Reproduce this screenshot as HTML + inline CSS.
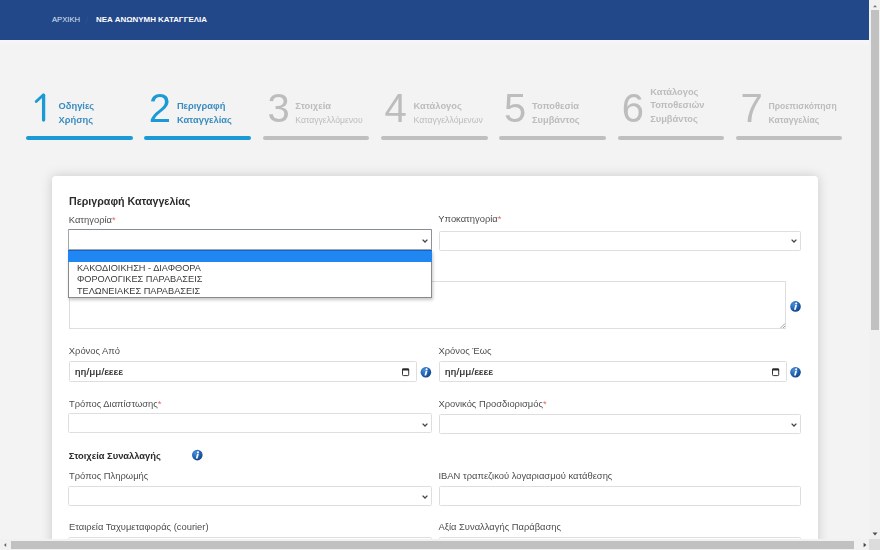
<!DOCTYPE html>
<html><head><meta charset="utf-8">
<style>
*{box-sizing:border-box}
html,body{margin:0;padding:0}
body{width:880px;height:550px;overflow:hidden;position:relative;background:#f3f3f3;font-family:"Liberation Sans",sans-serif}
.a{position:absolute;white-space:nowrap}
#hdr{left:0;top:0;width:869px;height:40px;background:#23488a}
.bc1{left:52px;top:15.3px;font-size:7.65px;color:#dfe6f2;line-height:10px}
.bcs{left:85.5px;top:15.5px;font-size:8.5px;color:#2c549a;line-height:10px}
.bc2{left:96px;top:15.3px;font-size:7.94px;color:#fff;font-weight:bold;line-height:10px}
.bar{top:135.6px;height:4.1px;width:106.5px;border-radius:2px;background:#bfbfbf}
.bar.on{background:#1c9ad6}
.dig{font-size:40px;line-height:40px;top:88px;color:#bdbdbd}
.dig.on{color:#1c9ad6}
.lbl{font-weight:bold;font-size:9.3px;line-height:13.5px;color:#bcbcbc}
.lbl.on{color:#3a8cc0}
.card{left:52px;top:176px;width:766px;height:420px;background:#fff;border-radius:4px;box-shadow:0 0 12px rgba(0,0,0,.17)}
.t{font-size:9.4px;color:#4d4d4d;line-height:12px}
.req{color:#e06a6a}
.inp{background:#fff;border:1px solid #dedede;border-radius:1.5px}
.chev{position:absolute;width:6px;height:4px}
.info{position:absolute;width:11.4px;height:11.4px;border-radius:50%;background:radial-gradient(circle at 40% 30%,#4f8fd6 0%,#1f62b0 55%,#154e96 100%)}
.info:after{content:"";position:absolute}
#vs{left:869px;top:0;width:11px;height:539px;background:#f1f1f1}
.dt{font-size:9.8px;line-height:12px;color:#222;letter-spacing:0.3px;-webkit-text-stroke:0.2px #222}
.opt{position:absolute;left:7.6px;font-size:9.2px;line-height:11.6px;color:#3a3a3a}
#hs{left:0;top:539px;width:869px;height:11px;background:#f1f1f1}
</style></head><body><div id="wrap" style="position:absolute;left:0;top:0;width:880px;height:550px;overflow:hidden;filter:blur(0.3px)">
<svg width="0" height="0" style="position:absolute"><defs><radialGradient id="g" cx="35%" cy="30%" r="75%"><stop offset="0" stop-color="#4a90dc"/><stop offset=".6" stop-color="#1f62b2"/><stop offset="1" stop-color="#123f80"/></radialGradient></defs></svg>
<div id="hdr" class="a"></div>
<div class="a" style="left:0;top:40px;width:869px;height:6px;background:linear-gradient(#f7f7fc,#f3f3f3)"></div>
<div class="a bc1">ΑΡΧΙΚΗ</div>
<div class="a bcs">/</div>
<div class="a bc2">ΝΕΑ ΑΝΩΝΥΜΗ ΚΑΤΑΓΓΕΛΙΑ</div>

<!-- steps -->
<div class="a bar on" style="left:26.1px"></div>
<div class="a bar on" style="left:144.4px"></div>
<div class="a bar" style="left:262.7px"></div>
<div class="a bar" style="left:381px"></div>
<div class="a bar" style="left:499.3px"></div>
<div class="a bar" style="left:617.6px"></div>
<div class="a bar" style="left:735.9px"></div>

<svg class="a" style="left:30px;top:90px" width="20" height="34" viewBox="30 90 20 34"><path d="M43.6 95.2V120.1" stroke="#1c9ad6" stroke-width="3.3" stroke-linecap="round"/><path d="M43.2 95 L36.2 101.6" stroke="#1c9ad6" stroke-width="2.8" stroke-linecap="round"/></svg>
<div class="a dig on" style="left:148.7px">2</div>
<div class="a dig" style="left:267.4px">3</div>
<div class="a dig" style="left:384.5px">4</div>
<div class="a dig" style="left:504px">5</div>
<div class="a dig" style="left:621.8px">6</div>
<div class="a dig" style="left:740.5px">7</div>

<div class="a lbl on" style="left:58.6px;top:100px">Οδηγίες<br>Χρήσης</div>
<div class="a lbl on" style="left:176.9px;top:100px">Περιγραφή<br>Καταγγελίας</div>
<div class="a lbl" style="left:295.3px;top:100px">Στοιχεία<br><span style="font-weight:normal;font-size:8.65px">Καταγγελλόμενου</span></div>
<div class="a lbl" style="left:413.5px;top:100px">Κατάλογος<br><span style="font-weight:normal;font-size:8.7px">Καταγγελλόμενων</span></div>
<div class="a lbl" style="left:532px;top:100px">Τοποθεσία<br>Συμβάντος</div>
<div class="a lbl" style="left:650.2px;top:85.8px">Κατάλογος<br>Τοποθεσιών<br>Συμβάντος</div>
<div class="a lbl" style="left:768.5px;top:100px;font-size:8.6px">Προεπισκόπηση<br>Καταγγελίας</div>

<!-- card -->
<div class="a card"></div>
<div class="a" style="left:69px;top:193.9px;font-size:10.66px;line-height:14px;font-weight:bold;color:#2b2b2b">Περιγραφή Καταγγελίας</div>
<div class="a t" style="left:68.8px;top:213.6px">Κατηγορία<span class="req">*</span></div>
<div class="a t" style="left:438.3px;top:213.4px">Υποκατηγορία<span class="req">*</span></div>

<div class="a inp" style="left:438.6px;top:230.5px;width:362px;height:20px"></div>
<svg class="a" style="left:790.5px;top:238.5px" width="6" height="4" viewBox="0 0 6 4"><polyline points="0.6,0.6 3,3 5.4,0.6" fill="none" stroke="#444" stroke-width="1.3"/></svg>

<div class="a inp" style="left:68.7px;top:281.2px;width:717.7px;height:48px;border-radius:0"></div>
<svg class="a" style="left:779px;top:322px" width="7" height="7" viewBox="0 0 7 7"><path d="M6 1.5L1.5 6M6 4L4 6" stroke="#888" stroke-width="0.8"/></svg>
<svg class="a" style="left:789px;top:300px" width="13" height="13" viewBox="0 0 13 13"><g transform="translate(0.50,0.40)"><circle cx="6" cy="6" r="5.3" fill="url(#g)"/><circle cx="6.7" cy="3.1" r="1.05" fill="#fff"/><path d="M5.8 4.7L7.5 4.7L6.3 9.3L4.5 9.3Z" fill="#fff"/></g></svg>

<div class="a t" style="left:68.8px;top:344.7px">Χρόνος Από</div>
<div class="a t" style="left:438.5px;top:344.7px">Χρόνος Έως</div>
<div class="a inp" style="left:68.5px;top:360.5px;width:348.3px;height:21.7px"></div>
<div class="a inp" style="left:438.6px;top:360.5px;width:348px;height:21.7px"></div>
<div class="a dt" style="left:75px;top:366.4px">ηη/μμ/εεεε</div>
<div class="a dt" style="left:445px;top:366.4px">ηη/μμ/εεεε</div>
<svg class="a" style="left:402.10px;top:368.10px" width="8" height="9" viewBox="0 0 8 9"><rect x="0.5" y="1" width="6.2" height="6.6" rx="0.9" fill="none" stroke="#2a2a2a" stroke-width="0.95"/><rect x="0.1" y="0.5" width="7" height="2" rx="0.6" fill="#2a2a2a"/></svg>
<svg class="a" style="left:771.60px;top:368.10px" width="8" height="9" viewBox="0 0 8 9"><rect x="0.5" y="1" width="6.2" height="6.6" rx="0.9" fill="none" stroke="#2a2a2a" stroke-width="0.95"/><rect x="0.1" y="0.5" width="7" height="2" rx="0.6" fill="#2a2a2a"/></svg>
<svg class="a" style="left:419px;top:366px" width="13" height="13" viewBox="0 0 13 13"><g transform="translate(0.90,0.30)"><circle cx="6" cy="6" r="5.3" fill="url(#g)"/><circle cx="6.7" cy="3.1" r="1.05" fill="#fff"/><path d="M5.8 4.7L7.5 4.7L6.3 9.3L4.5 9.3Z" fill="#fff"/></g></svg>
<svg class="a" style="left:789px;top:366px" width="13" height="13" viewBox="0 0 13 13"><g transform="translate(0.50,0.30)"><circle cx="6" cy="6" r="5.3" fill="url(#g)"/><circle cx="6.7" cy="3.1" r="1.05" fill="#fff"/><path d="M5.8 4.7L7.5 4.7L6.3 9.3L4.5 9.3Z" fill="#fff"/></g></svg>

<div class="a t" style="left:69px;top:398px">Τρόπος Διαπίστωσης<span class="req">*</span></div>
<div class="a t" style="left:438.5px;top:398px">Χρονικός Προσδιορισμός<span class="req">*</span></div>
<div class="a inp" style="left:68.3px;top:413.2px;width:363.3px;height:20px"></div><svg class="a" style="left:421.80px;top:422.60px" width="6" height="4" viewBox="0 0 6 4"><polyline points="0.6,0.6 3,3 5.4,0.6" fill="none" stroke="#444" stroke-width="1.3"/></svg>
<div class="a inp" style="left:438.6px;top:413.6px;width:362.0px;height:20px"></div><svg class="a" style="left:790.80px;top:422.60px" width="6" height="4" viewBox="0 0 6 4"><polyline points="0.6,0.6 3,3 5.4,0.6" fill="none" stroke="#444" stroke-width="1.3"/></svg>

<div class="a" style="left:68.7px;top:449.5px;font-size:9.36px;line-height:12px;font-weight:bold;color:#2b2b2b">Στοιχεία Συναλλαγής</div>
<svg class="a" style="left:191px;top:449px" width="13" height="13" viewBox="0 0 13 13"><g transform="translate(0.30,0.10)"><circle cx="6" cy="6" r="5.3" fill="url(#g)"/><circle cx="6.7" cy="3.1" r="1.05" fill="#fff"/><path d="M5.8 4.7L7.5 4.7L6.3 9.3L4.5 9.3Z" fill="#fff"/></g></svg>

<div class="a t" style="left:69px;top:469.8px">Τρόπος Πληρωμής</div>
<div class="a t" style="left:438.5px;top:469.8px">IBAN τραπεζικού λογαριασμού κατάθεσης</div>
<div class="a inp" style="left:68.3px;top:486.0px;width:363.3px;height:20px"></div><svg class="a" style="left:421.80px;top:495.00px" width="6" height="4" viewBox="0 0 6 4"><polyline points="0.6,0.6 3,3 5.4,0.6" fill="none" stroke="#444" stroke-width="1.3"/></svg>
<div class="a inp" style="left:438.6px;top:486px;width:362px;height:19.5px"></div>

<div class="a t" style="left:69px;top:521.2px">Εταιρεία Ταχυμεταφοράς (courier)</div>
<div class="a t" style="left:438.5px;top:521.2px">Αξία Συναλλαγής Παράβασης</div>
<div class="a inp" style="left:68.3px;top:537.3px;width:363.3px;height:20px"></div>
<div class="a inp" style="left:438.6px;top:537.3px;width:362px;height:20px"></div>

<!-- focused select + dropdown -->
<div class="a" style="left:68.3px;top:229.2px;width:363.3px;height:21px;background:#fff;border:1px solid #a0a6ae;border-top:1.3px solid #858d98;border-right-color:#8a929c;border-radius:1px"></div>
<svg class="a" style="left:421.8px;top:238.5px" width="6" height="4" viewBox="0 0 6 4"><polyline points="0.6,0.6 3,3 5.4,0.6" fill="none" stroke="#444" stroke-width="1.3"/></svg>
<div class="a" style="left:68.4px;top:249.8px;width:363.2px;height:48px;background:#fff;border:1px solid #8a8a8a;border-top:none;box-shadow:1px 2px 3px rgba(0,0,0,.22)">
<div style="position:absolute;left:-1px;top:0;right:-1px;height:12.5px;background:#1f86f2;border-top:0.8px solid #1a62c4"></div>
<div class="opt" style="top:13.3px">ΚΑΚΟΔΙΟΙΚΗΣΗ - ΔΙΑΦΘΟΡΑ</div>
<div class="opt" style="top:24.7px">ΦΟΡΟΛΟΓΙΚΕΣ ΠΑΡΑΒΑΣΕΙΣ</div>
<div class="opt" style="top:36.2px">ΤΕΛΩΝΕΙΑΚΕΣ ΠΑΡΑΒΑΣΕΙΣ</div>
</div>

<!-- scrollbars -->
<div class="a" id="vs"></div>
<div class="a" style="left:871px;top:10px;width:8px;height:320px;background:#c1c1c1"></div>
<svg class="a" style="left:872px;top:3.5px" width="6" height="4" viewBox="0 0 6 4"><path d="M1 3.2L3 1L5 3.2Z" fill="#777"/></svg>
<svg class="a" style="left:872px;top:531.5px" width="6" height="4" viewBox="0 0 6 4"><path d="M0.5 0.5L3 3.5L5.5 0.5Z" fill="#505050"/></svg>
<div class="a" id="hs"></div>
<div class="a" style="left:10.5px;top:541px;width:843.3px;height:7.5px;background:#c1c1c1"></div>
<svg class="a" style="left:3px;top:541.5px" width="4" height="6" viewBox="0 0 4 6"><path d="M3.2 1L1 3L3.2 5Z" fill="#666"/></svg>
<svg class="a" style="left:863px;top:541.5px" width="4" height="6" viewBox="0 0 4 6"><path d="M0.6 0.8L3.4 3L0.6 5.2Z" fill="#444"/></svg>
<div class="a" style="left:869px;top:539px;width:11px;height:11px;background:#dcdcdc"></div>
</div></body></html>
